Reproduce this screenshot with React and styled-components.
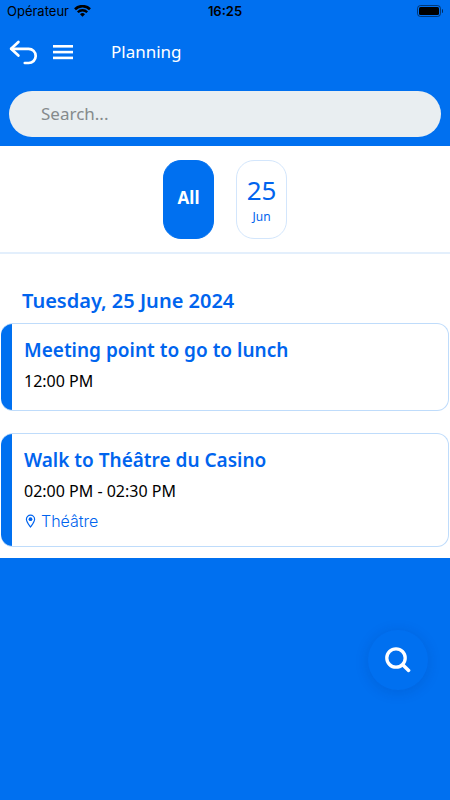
import React, { useState } from "react";
import styled, { createGlobalStyle } from "styled-components";

const blue = "#0070f0";
const textBlue = "#0064ee";
const paleBlue = "#bfdcfb";
const systemFont = `Inter, "Liberation Sans", sans-serif`;

const GlobalStyle = createGlobalStyle`
  *, *::before, *::after { box-sizing: border-box; }
  body {
    margin: 0;
    background: ${blue};
    font-family: "Noto Sans", "Open Sans", sans-serif;
  }
  button, input { font: inherit; }
  h1, h2, h3, p { margin: 0; }
`;

const Screen = styled.div`
  min-height: 100vh;
  background: ${blue};
`;

const StatusBar = styled.div`
  display: grid;
  grid-template-columns: 1fr auto 1fr;
  align-items: center;
  height: 22px;
  padding: 0 7px;
  font-family: ${systemFont};
  font-size: 13px;
  line-height: 22px;
  color: #000;
`;

const Carrier = styled.span`
  display: flex;
  align-items: center;
  gap: 5px;
`;

const Clock = styled.time`
  font-weight: 600;
`;

const BatteryIcon = styled.svg`
  justify-self: end;
`;

const NavBar = styled.header`
  display: flex;
  align-items: center;
  height: 60px;
  padding: 0 8px;
  color: #fff;
`;

const IconButton = styled.button`
  display: flex;
  padding: 0;
  margin-right: ${(p) => p.$gap}px;
  border: 0;
  background: none;
  color: inherit;
  cursor: pointer;
`;

const Title = styled.h1`
  font-size: 17px;
  line-height: 24px;
  font-weight: 400;
`;

const SearchArea = styled.form`
  padding: 9px;
`;

const SearchInput = styled.input`
  display: block;
  width: 100%;
  height: 46px;
  padding: 0 32px 2px;
  border: 0;
  border-radius: 23px;
  outline: 0;
  background: #e9eef1;
  color: #333;
  font-size: 17px;
  &::placeholder { color: #858a8c; opacity: 1; }
`;

const Content = styled.main`
  padding-bottom: 11px;
  background: #fff;
`;

const DateFilter = styled.nav`
  display: flex;
  justify-content: center;
  gap: 22px;
  padding: 14px 0 13px;
  border-bottom: 2px solid #e3effc;
`;

const DateChip = styled.button`
  display: flex;
  flex-direction: column;
  align-items: center;
  justify-content: center;
  width: 51px;
  height: 79px;
  padding: 0;
  border: 1px solid ${(p) => (p.$active ? blue : "#d3e6fc")};
  border-radius: 18px;
  background: ${(p) => (p.$active ? blue : "#fff")};
  color: ${(p) => (p.$active ? "#fff" : textBlue)};
  cursor: pointer;
`;

const ChipLabel = styled.span`
  padding-bottom: 4px;
  font-size: 17px;
  line-height: 24px;
  font-weight: 700;
`;

const ChipDay = styled.span`
  font-size: 26px;
  line-height: 34px;
`;

const ChipMonth = styled.span`
  font-size: 12px;
  line-height: 20px;
`;

const DayHeading = styled.h2`
  padding: 33px 22px 8px;
  color: ${textBlue};
  font-size: 20px;
  line-height: 28px;
  font-weight: 600;
`;

const EventList = styled.div`
  display: flex;
  flex-direction: column;
  gap: 22px;
  padding: 0 1px;
`;

const EventCard = styled.article`
  display: flex;
  overflow: hidden;
  border: 1px solid ${paleBlue};
  border-left: 0;
  border-radius: 12px;
  background: linear-gradient(to right, ${blue} 11px, #fff 11px);
  padding: 12px 12px 12px 23px;
`;

const EventBody = styled.div`
  min-width: 0;
`;

const EventTitle = styled.h3`
  color: ${textBlue};
  font-size: 19px;
  line-height: 28px;
  font-weight: 600;
`;

const EventTime = styled.p`
  padding: 4px 0;
  color: #000;
  font-size: 16px;
  line-height: 26px;
`;

const EventPlace = styled.p`
  display: flex;
  align-items: center;
  gap: 4px;
  color: ${textBlue};
  font-family: ${systemFont};
  font-size: 16px;
  font-weight: 300;
  line-height: 26px;
`;

const SearchFab = styled.button`
  position: fixed;
  right: 22px;
  bottom: 110px;
  display: flex;
  align-items: center;
  justify-content: center;
  width: 60px;
  height: 60px;
  padding: 0;
  border: 0;
  border-radius: 50%;
  background: ${blue};
  box-shadow: 0 2px 14px rgba(0, 40, 110, 0.16);
  cursor: pointer;
`;

const Wifi = () => (
  <svg width="17" height="12" viewBox="0 0 17 12" fill="none" stroke="#000" aria-hidden="true">
    <path d="M1 4.2a10.7 10.7 0 0 1 15 0" strokeWidth="2.6" />
    <path d="M3.8 7.2a6.6 6.6 0 0 1 9.4 0" strokeWidth="2.3" />
    <path d="M8.5 11.8 6 9.3a3.6 3.6 0 0 1 5 0z" fill="#000" stroke="none" />
  </svg>
);

const Battery = () => (
  <BatteryIcon width="26" height="12" viewBox="0 0 26 12" aria-hidden="true">
    <rect x="0.5" y="0.5" width="23" height="11" rx="3" fill="none" stroke="#000" strokeOpacity="0.5" />
    <rect x="2" y="2" width="20" height="8" rx="1.5" fill="#000" />
    <path d="M25 4v4a2.2 2.2 0 0 0 0-4z" fill="#000" fillOpacity="0.6" />
  </BatteryIcon>
);

const BackIcon = () => (
  <svg width="30" height="26" viewBox="0 0 30 26" fill="none" stroke="#fff" strokeWidth="2.7" strokeLinecap="round" strokeLinejoin="round" aria-hidden="true">
    <path d="M10.4 3 3.1 9.8l7.3 6.8" />
    <path d="M3.3 9.8H20.6a7.1 7.1 0 0 1 0 14.2h-3.8" />
  </svg>
);

const MenuIcon = () => (
  <svg width="20" height="16" viewBox="0 0 20 16" fill="#fff" aria-hidden="true">
    <rect y="1" width="20" height="2.6" />
    <rect y="6.8" width="20" height="2.6" />
    <rect y="12.6" width="20" height="2.6" />
  </svg>
);

const PinIcon = () => (
  <svg width="13" height="14" viewBox="0 0 13 14" aria-hidden="true">
    <path d="M6.5 13C4.5 10.2 2.4 7.6 2.4 5.2a4.1 4.1 0 0 1 8.2 0C10.6 7.6 8.5 10.2 6.5 13z" fill="none" stroke={textBlue} strokeWidth="1.2" />
    <circle cx="6.5" cy="5.2" r="1.9" fill={textBlue} />
  </svg>
);

const GlassIcon = () => (
  <svg width="26" height="26" viewBox="0 0 26 26" fill="none" stroke="#fff" strokeLinecap="round" aria-hidden="true">
    <circle cx="11" cy="11" r="9.2" strokeWidth="3.3" />
    <path d="m18 18 5.6 5.4" strokeWidth="3.5" />
  </svg>
);

const events = [
  { title: "Meeting point to go to lunch", time: "12:00 PM" },
  { title: "Walk to Théâtre du Casino", time: "02:00 PM - 02:30 PM", place: "Théâtre" },
];

export default function App() {
  const [day, setDay] = useState("all");
  return (
    <Screen>
      <GlobalStyle />
      <StatusBar>
        <Carrier>Opérateur <Wifi /></Carrier>
        <Clock>16:25</Clock>
        <Battery />
      </StatusBar>
      <NavBar>
        <IconButton type="button" aria-label="Back" $gap={15}><BackIcon /></IconButton>
        <IconButton type="button" aria-label="Menu" $gap={38}><MenuIcon /></IconButton>
        <Title>Planning</Title>
      </NavBar>
      <SearchArea role="search" onSubmit={(e) => e.preventDefault()}>
        <SearchInput type="text" placeholder="Search..." aria-label="Search" />
      </SearchArea>
      <Content>
        <DateFilter aria-label="Dates">
          <DateChip type="button" $active={day === "all"} aria-pressed={day === "all"} onClick={() => setDay("all")}>
            <ChipLabel>All</ChipLabel>
          </DateChip>
          <DateChip type="button" $active={day === "25"} aria-pressed={day === "25"} onClick={() => setDay("25")}>
            <ChipDay>25</ChipDay>
            <ChipMonth>Jun</ChipMonth>
          </DateChip>
        </DateFilter>
        <DayHeading>Tuesday, 25 June 2024</DayHeading>
        <EventList>
          {events.map((event) => (
            <EventCard key={event.title}>
              <EventBody>
                <EventTitle>{event.title}</EventTitle>
                <EventTime>{event.time}</EventTime>
                {event.place && <EventPlace><PinIcon />{event.place}</EventPlace>}
              </EventBody>
            </EventCard>
          ))}
        </EventList>
      </Content>
      <SearchFab type="button" aria-label="Search the planning"><GlassIcon /></SearchFab>
    </Screen>
  );
}
